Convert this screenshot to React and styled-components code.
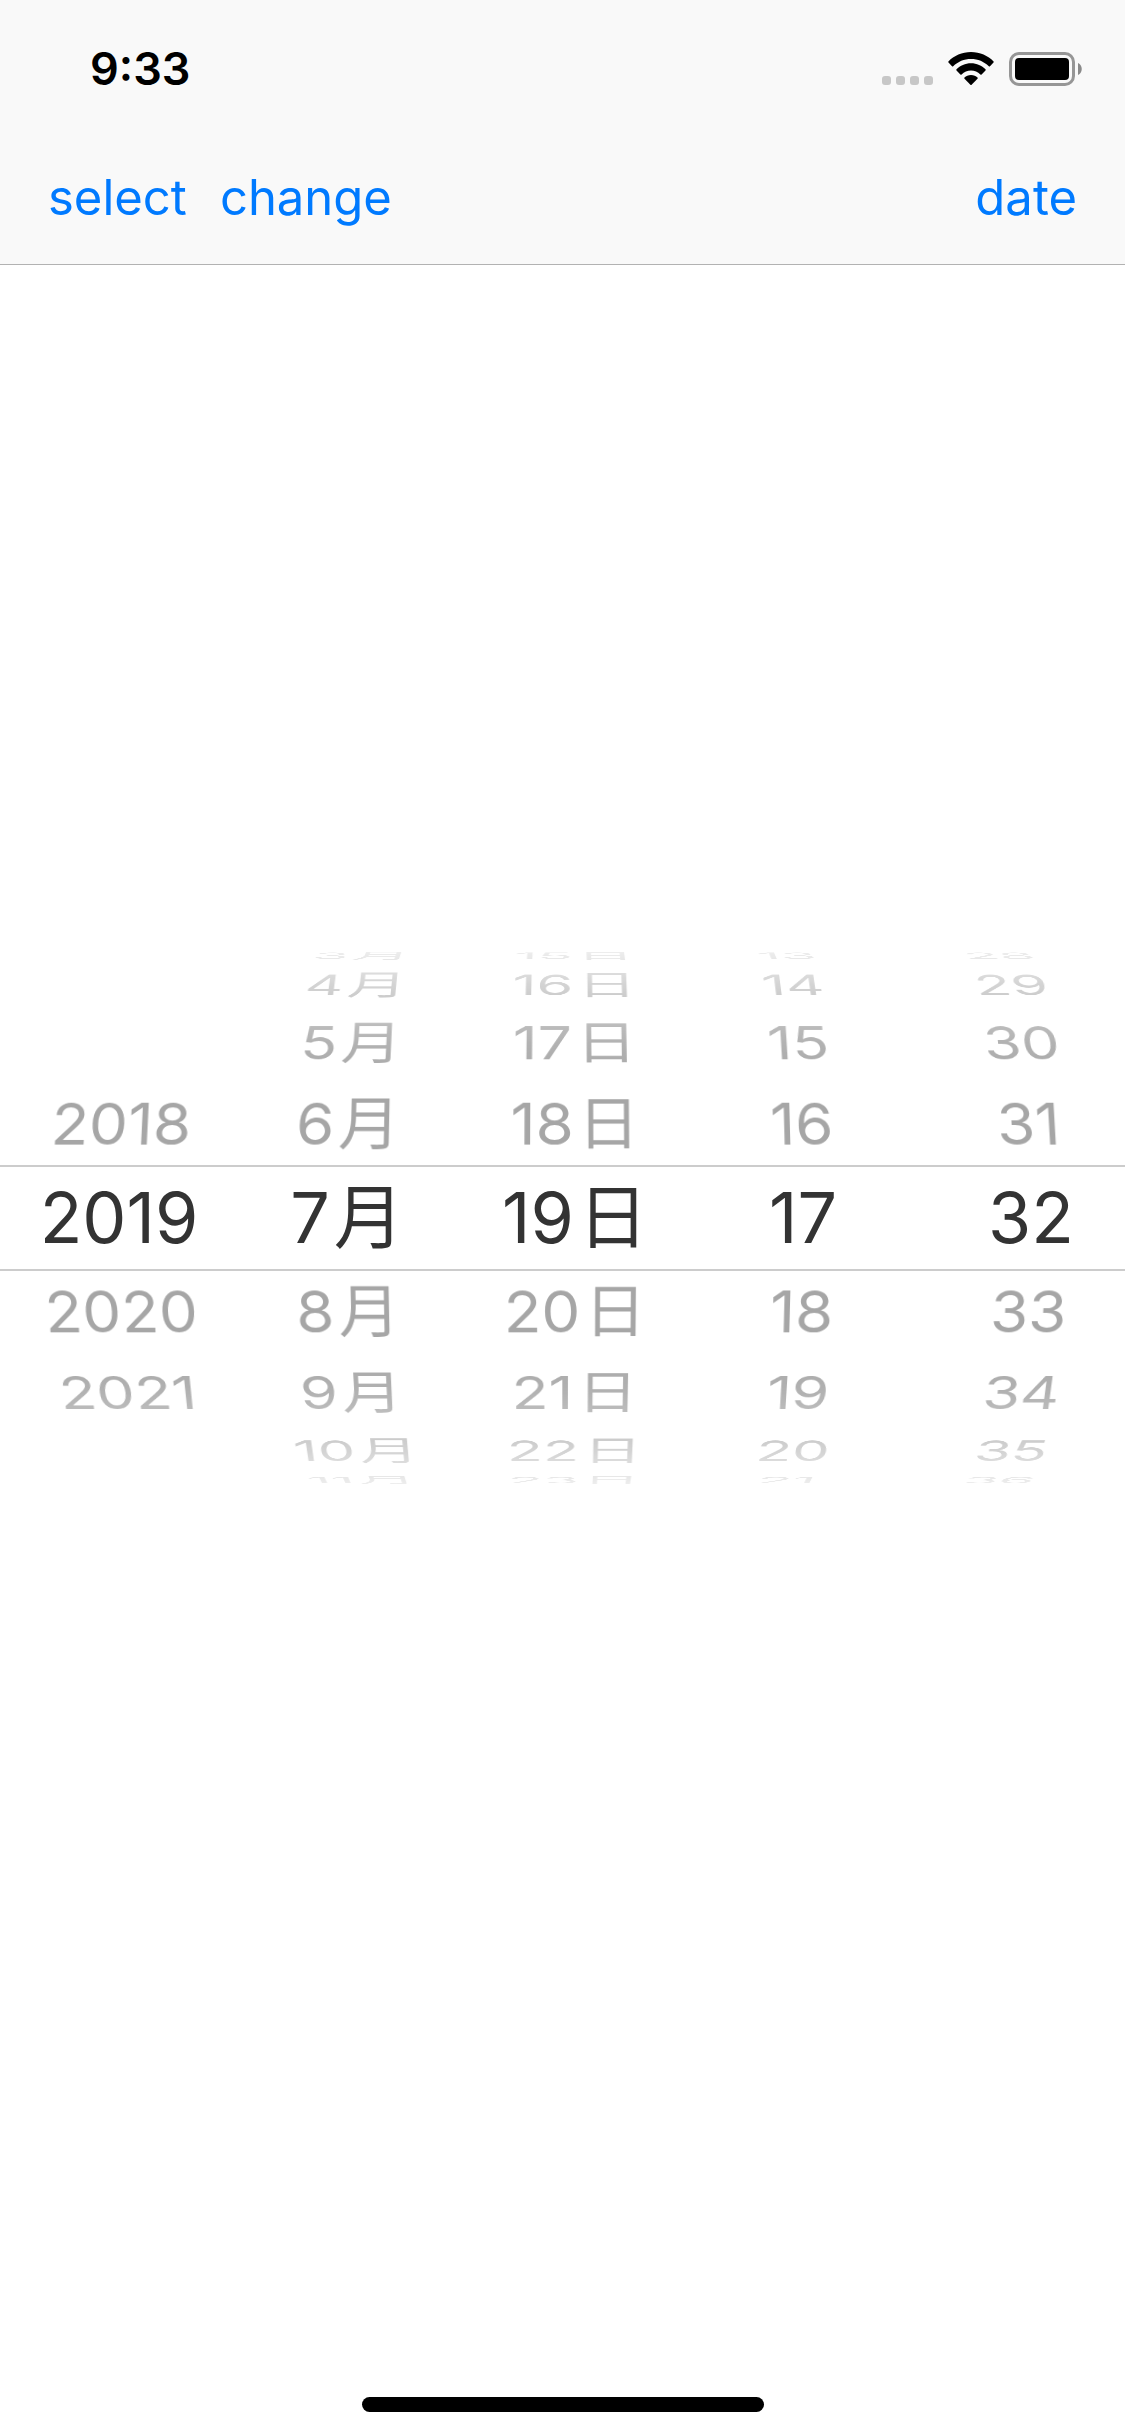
import React from "react";
import styled, { createGlobalStyle } from "styled-components";

const ROW_ANGLE = 19;
const WHEEL_RADIUS = 290;

const GlobalStyle = createGlobalStyle`
  *, *::before, *::after { box-sizing: border-box; }
  body {
    margin: 0;
    background: #ffffff;
    font-family: Inter, "Noto Sans CJK SC", sans-serif;
  }
`;

const Screen = styled.div`
  display: flex;
  flex-direction: column;
  min-height: 100vh;
  overflow: hidden;
`;

const Header = styled.header`
  background: #f9f9f9;
  border-bottom: 1px solid #b2b2b2;
`;

const StatusBar = styled.div`
  display: flex;
  align-items: center;
  justify-content: space-between;
  height: 132px;
  padding: 6px 43px 0 90px;
`;

const Clock = styled.time`
  font-size: 45px;
  line-height: 56px;
  font-weight: 600;
  color: #000000;
`;

const StatusIcons = styled.div`
  display: flex;
  align-items: center;
  gap: 15px;
`;

const NavBar = styled.nav`
  display: flex;
  align-items: center;
  justify-content: space-between;
  height: 132px;
  padding: 0 48px;
`;

const NavGroup = styled.div`
  display: flex;
  gap: 33px;
`;

const NavButton = styled.button`
  border: 0;
  padding: 0;
  background: none;
  font: inherit;
  font-size: 49px;
  line-height: 64px;
  color: #007aff;
  cursor: pointer;
`;

const Main = styled.main`
  flex: 1;
  display: flex;
  flex-direction: column;
  justify-content: center;
  padding-bottom: 226px;
`;

const PickerFrame = styled.section`
  display: grid;
`;

const Wheels = styled.div`
  grid-area: 1 / 1;
  height: 532px;
  overflow: hidden;
  perspective: 3000px;
  mask-image: linear-gradient(
    to bottom,
    rgba(0, 0, 0, 0.2) 0,
    rgba(0, 0, 0, 0.5) 34px,
    rgba(0, 0, 0, 0.87) 92px,
    #000 140px,
    #000 392px,
    rgba(0, 0, 0, 0.87) 440px,
    rgba(0, 0, 0, 0.5) 498px,
    rgba(0, 0, 0, 0.2) 532px
  );
`;

const WheelGrid = styled.div`
  display: grid;
  grid-template-columns: repeat(5, 1fr);
  height: 100%;
  margin: 0 -20px 0 5px;
  transform-style: preserve-3d;
`;

const Wheel = styled.ul`
  display: grid;
  align-content: center;
  margin: 0;
  padding: 0;
  list-style: none;
  transform-style: preserve-3d;
  transform: translateZ(-${WHEEL_RADIUS}px);
`;

const Option = styled.li`
  grid-area: 1 / 1;
  height: 96px;
  line-height: 96px;
  text-align: center;
  white-space: nowrap;
  font-size: ${(p) => (p.$step === 0 ? 70 : 62)}px;
  color: ${(p) => (p.$step === 0 ? "#333333" : "#a6a6a6")};
  transform: rotateX(${(p) => -p.$step * ROW_ANGLE}deg) translateZ(${WHEEL_RADIUS}px);
`;

const Unit = styled.span`
  margin-left: 4px;
`;

const SelectionBand = styled.div`
  grid-area: 1 / 1;
  align-self: center;
  height: 106px;
  border: solid #cccccc;
  border-width: 2px 0;
  pointer-events: none;
`;

const Footer = styled.footer`
  display: flex;
  justify-content: center;
  padding-bottom: 24px;
`;

const HomeIndicator = styled.div`
  width: 402px;
  height: 15px;
  border-radius: 8px;
  background: #000000;
`;

const CellularIcon = () => (
  <svg width="51" height="34" viewBox="0 0 51 34" aria-hidden="true">
    {[0, 14, 28, 42].map((x) => (
      <rect key={x} x={x} y="24" width="9" height="9" rx="3" fill="#c7c7c7" />
    ))}
  </svg>
);

const WifiIcon = () => (
  <svg width="46" height="34" viewBox="0 0 46 34" aria-hidden="true">
    <path d="M23 0C32 0 40 3.600 45.600 9.400Q46 10 45.500 10.600L42 14.200Q41.400 14.700 40.800 14.200C36 9.600 30 7 23 7S10 9.600 5.200 14.200Q4.600 14.700 4 14.200L.5 10.600Q0 10 .4 9.400C6 3.600 14 0 23 0Z" />
    <path d="M23 11.200C28.800 11.200 33.800 13.500 37.500 17.300Q38 17.900 37.500 18.500L33.600 22.400Q33 22.900 32.400 22.400C29.800 20 26.600 18.600 23 18.600S16.200 20 13.600 22.400Q13 22.900 12.400 22.400L8.500 18.500Q8 17.900 8.500 17.300C12.200 13.500 17.200 11.200 23 11.200Z" />
    <path d="M23 23C25.700 23 27.900 24 29.500 25.500Q30 26.100 29.500 26.700L23.600 32.700Q23 33.200 22.400 32.700L16.500 26.700Q16 26.100 16.500 25.500C18.100 24 20.300 23 23 23Z" />
  </svg>
);

const BatteryIcon = () => (
  <svg width="73" height="34" viewBox="0 0 73 34" aria-hidden="true">
    <rect x="1.500" y="1.500" width="63" height="31" rx="8.500" fill="none" stroke="#969696" strokeWidth="3" />
    <rect x="6" y="6" width="54" height="22" rx="4" />
    <path d="M69 11C74 13 74 21 69 23Z" fill="#8a8a8a" />
  </svg>
);

const series = (from, to) => Array.from({ length: to - from + 1 }, (_, i) => from + i);

const wheels = [
  { name: "year", selected: 2019, values: series(2018, 2021) },
  { name: "month", selected: 7, values: series(3, 11), unit: "月" },
  { name: "day", selected: 19, values: series(15, 23), unit: "日" },
  { name: "hour", selected: 17, values: series(13, 21) },
  { name: "minute", selected: 32, values: series(28, 36) },
];

export default function App() {
  return (
    <Screen>
      <GlobalStyle />
      <Header>
        <StatusBar>
          <Clock>9:33</Clock>
          <StatusIcons>
            <CellularIcon />
            <WifiIcon />
            <BatteryIcon />
          </StatusIcons>
        </StatusBar>
        <NavBar>
          <NavGroup>
            <NavButton type="button">select</NavButton>
            <NavButton type="button">change</NavButton>
          </NavGroup>
          <NavButton type="button">date</NavButton>
        </NavBar>
      </Header>
      <Main>
        <PickerFrame>
          <Wheels>
            <WheelGrid>
              {wheels.map((wheel) => (
                <Wheel key={wheel.name} role="listbox" aria-label={wheel.name} tabIndex={0}>
                  {wheel.values.map((value) => (
                    <Option
                      key={value}
                      role="option"
                      aria-selected={value === wheel.selected}
                      $step={value - wheel.selected}
                    >
                      {value}
                      {wheel.unit && <Unit>{wheel.unit}</Unit>}
                    </Option>
                  ))}
                </Wheel>
              ))}
            </WheelGrid>
          </Wheels>
          <SelectionBand />
        </PickerFrame>
      </Main>
      <Footer>
        <HomeIndicator />
      </Footer>
    </Screen>
  );
}
